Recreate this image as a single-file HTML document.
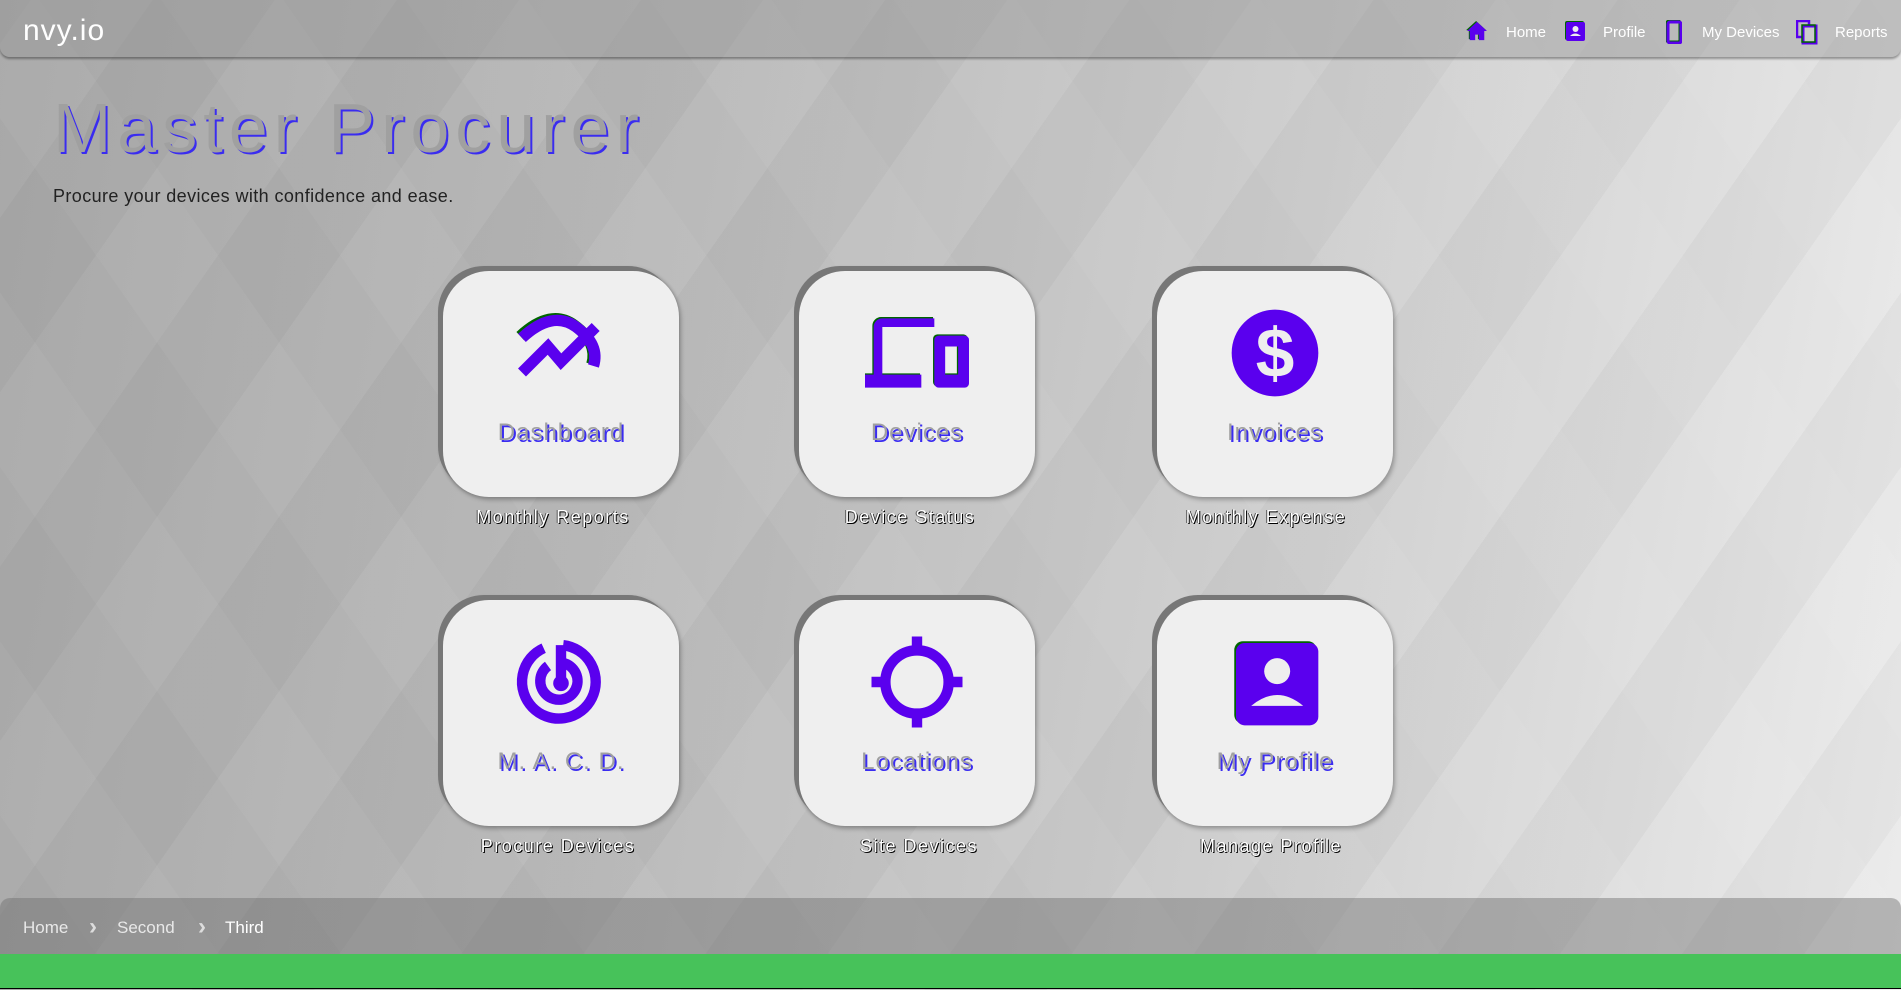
<!DOCTYPE html>
<html><head><meta charset="utf-8"><style>
*{margin:0;padding:0;box-sizing:border-box}
body{width:1901px;height:990px;overflow:hidden;position:relative;font-family:"Liberation Sans",sans-serif;
background:linear-gradient(100deg,#a8a8a8 0%,#bababa 35%,#cecece 65%,#ececec 100%);}
.pat{position:absolute;inset:0;background:
repeating-linear-gradient(55deg,rgba(255,255,255,0) 0 100px,rgba(255,255,255,.04) 100px 200px),
repeating-linear-gradient(-55deg,rgba(0,0,0,0) 0 100px,rgba(0,0,0,.03) 100px 200px);}
.hdr{position:absolute;left:0;top:0;width:1901px;height:57px;background:rgba(150,150,150,.45);border-radius:0 0 10px 10px;box-shadow:0 2px 2px rgba(0,0,0,.35)}
.logo{position:absolute;left:23px;top:14px;color:#fff;font-size:30px;letter-spacing:1px}
.nav{position:absolute;top:24px;font-size:15px;color:#fff}
h1{position:absolute;left:53px;top:88px;font-size:70px;font-weight:normal;color:#a0a0a0;letter-spacing:6px;text-shadow:2px 2px 0 #3a2cf0}
.sub{position:absolute;left:53px;top:186px;font-size:18px;color:#222;letter-spacing:.4px}
.card{position:absolute;width:236px;height:226px;background:#efefef;border-radius:46px;box-shadow:-5px -5px 0 #777,-2px -2px 4px rgba(0,0,0,.3),2px 3px 4px rgba(0,0,0,.25)}
.card svg{position:absolute;left:66px;top:30px;width:104px;height:104px}
.card .t{position:absolute;left:0;width:236px;top:148px;text-align:center;font-size:24px;color:#a0a0a0;text-shadow:2px 2px 0 #3a2cf0;letter-spacing:1px}
.lab{position:absolute;width:236px;text-align:center;font-size:18px;color:#fff;letter-spacing:1.5px;text-shadow:1px 1px 0 #000,-1px 0 0 #555}
.crumb{position:absolute;left:0;top:898px;width:1901px;height:56px;background:rgba(110,110,110,.45);border-radius:10px 10px 0 0}
.crumb span{position:absolute;top:20px;font-size:17px;color:#e8e8e8}
.crumb b{position:absolute;top:15px;font-size:24px;color:#ddd;font-weight:bold}
.green{position:absolute;left:0;top:954px;width:1901px;height:35px;background:#47c25a;border-bottom:1px solid #000}
</style></head><body>
<div class="pat"></div>
<div class="hdr">
<div class="logo">nvy.io</div>
<svg style="position:absolute;left:1466px;top:21px" width="22" height="20" viewBox="0 0 24 22"><path d="M12 1 1 11h3v10h6v-6h4v6h6V11h3z" fill="#006400" transform="translate(-1,-1)"/><path d="M12 1 1 11h3v10h6v-6h4v6h6V11h3z" fill="#5a00ee"/></svg>
<div class="nav" style="left:1506px">Home</div>
<svg style="position:absolute;left:1565px;top:21px" width="20" height="20" viewBox="0 0 20 20"><rect x="0" y="0" width="19" height="19" rx="2" fill="#006400"/><rect x="1" y="1" width="19" height="19" rx="2" fill="#5a00ee"/><circle cx="10.5" cy="8" r="3" fill="#eee"/><path d="M5 15q5-5 11 0z" fill="#eee"/></svg>
<div class="nav" style="left:1603px">Profile</div>
<svg style="position:absolute;left:1666px;top:20px" width="16" height="24" viewBox="0 0 16 24"><rect x="1" y="1" width="13" height="21" rx="2" fill="none" stroke="#006400" stroke-width="3"/><rect x="2" y="2" width="13" height="21" rx="2" fill="none" stroke="#5a00ee" stroke-width="3"/></svg>
<div class="nav" style="left:1702px">My Devices</div>
<svg style="position:absolute;left:1796px;top:20px" width="22" height="25" viewBox="0 0 22 25"><rect x="1" y="1" width="12" height="16" fill="none" stroke="#5a00ee" stroke-width="2.5"/><rect x="7" y="6" width="13" height="17" fill="#ccc" stroke="#5a00ee" stroke-width="3"/><rect x="6" y="5" width="13" height="17" fill="none" stroke="#006400" stroke-width="1.5"/></svg>
<div class="nav" style="left:1835px">Reports</div>
</div>
<h1>Master Procurer</h1>
<div class="sub">Procure your devices with confidence and ease.</div>

<div class="card" style="left:443px;top:271px"><svg viewBox="0 0 24 24"><g fill="none" stroke-width="2.6"><path d="M3 8.5Q10 2 15.5 6T19.5 15" stroke="#006400" transform="translate(-.4,-.4)"/><path d="M3 8.5Q10 2 15.5 6T19.5 15" stroke="#5a00ee"/><path d="M3 16.5l6-6 3 3.5 8-8" stroke="#5a00ee"/></g></svg><div class="t">Dashboard</div></div>
<div class="lab" style="left:435px;top:507px">Monthly Reports</div>

<div class="card" style="left:799px;top:271px"><svg viewBox="0 0 24 24"><path d="M4 6h12V4H4a2 2 0 0 0-2 2v11H0v3h13v-3H4zm19 2h-6a1 1 0 0 0-1 1v10a1 1 0 0 0 1 1h6a1 1 0 0 0 1-1V9a1 1 0 0 0-1-1zm-1.5 9h-3v-6.5h3z" fill="#006400" transform="translate(-.3,-.3)"/><path d="M4 6h12V4H4a2 2 0 0 0-2 2v11H0v3h13v-3H4zm19 2h-6a1 1 0 0 0-1 1v10a1 1 0 0 0 1 1h6a1 1 0 0 0 1-1V9a1 1 0 0 0-1-1zm-1.5 9h-3v-6.5h3z" fill="#5a00ee"/></svg><div class="t">Devices</div></div>
<div class="lab" style="left:792px;top:507px">Device Status</div>

<div class="card" style="left:1157px;top:271px"><svg viewBox="0 0 24 24"><circle cx="12" cy="12" r="10" fill="#5a00ee"/><text x="12" y="17.5" text-anchor="middle" font-size="16" font-weight="bold" fill="#eee" font-family="Liberation Sans">$</text></svg><div class="t">Invoices</div></div>
<div class="lab" style="left:1148px;top:507px">Monthly Expense</div>

<div class="card" style="left:443px;top:600px"><svg viewBox="0 0 24 24"><g fill="none" stroke="#5a00ee" stroke-width="2.4"><path d="M8 4.2A8.5 8.5 0 1 0 12.5 3.5"/><path d="M9 8.3A4.3 4.3 0 1 0 12.5 7.6"/><path d="M12 3.5v9"/></g><circle cx="12" cy="12.3" r="1.8" fill="#5a00ee"/></svg><div class="t">M. A. C. D.</div></div>
<div class="lab" style="left:440px;top:836px">Procure Devices</div>

<div class="card" style="left:799px;top:600px"><svg viewBox="0 0 24 24"><g fill="none" stroke="#5a00ee" stroke-width="2.4"><circle cx="12" cy="12" r="7.3"/><path d="M12 1.5v3.5M12 19v3.5M1.5 12H5M19 12h3.5"/></g></svg><div class="t">Locations</div></div>
<div class="lab" style="left:801px;top:836px">Site Devices</div>

<div class="card" style="left:1157px;top:600px"><svg viewBox="0 0 24 24"><rect x="2.6" y="2.6" width="19" height="19" rx="2" fill="#006400"/><rect x="3" y="3" width="19" height="19" rx="2" fill="#5a00ee"/><circle cx="12.5" cy="9.5" r="3" fill="#eee"/><path d="M6.5 17.5q6-5 12 0z" fill="#eee"/></svg><div class="t">My Profile</div></div>
<div class="lab" style="left:1153px;top:836px">Manage Profile</div>

<div class="crumb">
<span style="left:23px">Home</span><b style="left:89px">&#x203A;</b>
<span style="left:117px">Second</span><b style="left:198px">&#x203A;</b>
<span style="left:225px;color:#fff">Third</span>
</div>
<div class="green"></div>
</body></html>
